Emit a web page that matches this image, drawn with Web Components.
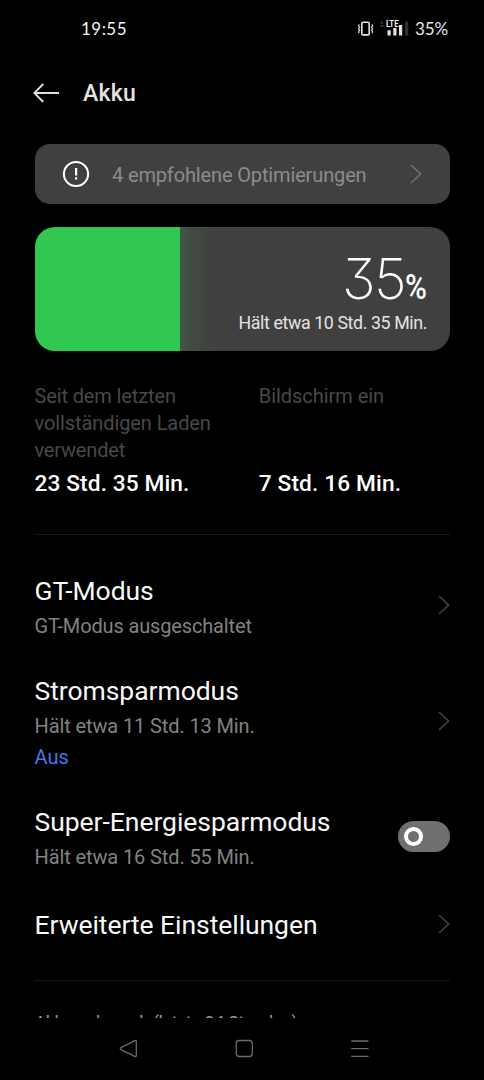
<!DOCTYPE html>
<html lang="de">
<head>
<meta charset="utf-8">
<title>Akku</title>
<style>
html,body{margin:0;background:#000;height:100%;overflow:hidden}
body{font-family:Roboto,"Liberation Sans",sans-serif}
</style>
</head>
<body>
<battery-screen></battery-screen>
<script>
const make = (name, html, after) => customElements.define(name, class extends HTMLElement {
  connectedCallback() {
    if (this.shadowRoot) return;
    const t = document.createElement('template');
    t.innerHTML = html;
    this.attachShadow({mode: 'open'}).append(t.content.cloneNode(true));
    if (after) after(this);
  }
});

// One line of text, tracked so that it fills the width given in "w".
make('fit-text', `<style>:host{display:block;white-space:nowrap}span{display:inline-block}</style><span><slot></slot></span>`, el => {
  const s = el.shadowRoot.querySelector('span');
  const w = parseFloat(el.getAttribute('w'));
  const nodes = el.shadowRoot.querySelector('slot').assignedNodes({flatten: true});
  const n = nodes.map(x => x.textContent).join('').length;
  if (w && n) s.style.letterSpacing = ((w - s.getBoundingClientRect().width) / n).toFixed(3) + 'px';
});

make('chevron-icon', `<style>:host{display:block;width:12px;height:20px;color:#424242}svg{display:block}</style>
<svg width="12" height="20" viewBox="0 0 12 20" fill="none" stroke="currentColor" stroke-width="1.6"><path d="M1 1 10.600 10 1 19"/></svg>`);

make('status-bar', `<style>
:host{display:flex;height:56px;box-sizing:border-box;padding:17px 36px 0 81px;justify-content:space-between;color:#e8e8e8;font-family:Lato,Roboto,sans-serif;font-size:17px;line-height:24px}
.r{display:flex}svg{display:block}
.t{color:#f4f4f4}
</style>
<fit-text class="t" w="46">19:55</fit-text>
<div class="r">
<svg width="58" height="24" viewBox="357 17 58 24" fill="none">
<rect x="361.800" y="22.300" width="7.400" height="12.600" rx="1.200" stroke="#e4e4e4" stroke-width="1.600"/>
<path d="M358.800 24.200v2l.8 1-1 1.500 1 1.500-.8 1v2M372.400 24.200v2l-.8 1 1 1.500-1 1.500.8 1v2" stroke="#c8c8c8" stroke-width="1.400"/>
<path d="M379.600 23.400 381.800 21l2.200 2.400zM379.600 25l2.200 2.400L384 25z" fill="#383838"/>
<text x="386" y="26.600" font-family="Roboto" font-size="8.300" font-weight="700" fill="#f0f0f0" textLength="12.500" lengthAdjust="spacingAndGlyphs">LTE</text>
<path d="M387.500 30.200h3.200v5.400h-3.200zM393.300 28h3.200v7.600h-3.200zM399 25h3.200v10.600h-3.200z" fill="#e4e4e4"/>
<path d="M405 21.500h3.200v14.100H405z" fill="#303030"/>
</svg>
<fit-text w="33">35%</fit-text>
</div>`);

make('app-header', `<style>
:host{display:flex;height:88px;box-sizing:border-box;padding:21px 0 0 33px;align-items:flex-start;color:#e2e2e2}
svg{display:block;margin-top:6px}
fit-text{margin:1px 0 0 24px;font-size:23px;font-weight:500;line-height:32px}
</style>
<svg width="26" height="20" viewBox="0 0 26 20" fill="none" stroke="#e0e0e0" stroke-width="1.800"><path d="M26 10H1.500M10.300 1 1.300 10l9 9"/></svg>
<fit-text w="53"><slot></slot></fit-text>`);

make('tip-card', `<style>
:host{display:flex;align-items:center;height:60px;margin:0 34.500px;border-radius:15px;background:#404040;color:#8c8c8c}
svg{display:block;margin-left:27.500px}
fit-text{margin-left:22px;font-size:20px;line-height:26px;padding-top:2px}
chevron-icon{margin-left:auto;margin-right:28px;color:#707070}
</style>
<svg width="28" height="28" viewBox="0 0 28 28" fill="none"><circle cx="14" cy="14" r="12.100" stroke="#fff" stroke-width="2"/><path d="M13 8h2.200v7.500H13zM13 17.200h2.200v2.300H13z" fill="#fff"/></svg>
<fit-text w="254.500"><slot></slot></fit-text><chevron-icon></chevron-icon>`);

make('battery-card', `<style>
:host{display:flex;flex-direction:column;align-items:flex-end;height:124px;box-sizing:border-box;margin:23px 34.500px 0;padding-right:22.500px;border-radius:20px;color:#fff;
background:linear-gradient(90deg,#30c850 0 145.500px,#405844 145.500px,#404b42 158px,#404040 180px)}
.n{display:flex;align-items:baseline;height:82px;line-height:104px}
.d{font-family:Inter,sans-serif;font-weight:200;font-size:56.500px;font-feature-settings:"cv09" 1}
.p{font-family:Roboto,sans-serif;font-weight:500;font-size:35px;width:22px;transform:scaleX(.85);transform-origin:0 0}
.s{font-size:17.800px;line-height:28px;color:#e4e4e4}
</style>
<div class="n"><fit-text class="d" w="63">35</fit-text><fit-text class="p">%</fit-text></div>
<fit-text class="s" w="188.500"><slot></slot></fit-text>`);

make('usage-stats', `<style>
:host{display:grid;grid-template-columns:224.300px 1fr;margin:31px 34px 0 34.500px;height:152px;box-sizing:content-box;border-bottom:1px solid #1a1a1a}
.l{font-size:20px;line-height:27.200px;height:84.500px;padding-top:.5px;color:#484848}
.v{font-size:22.700px;font-weight:500;line-height:34px;color:#fff}
</style>
<div><div class="l"><fit-text w="141.300">Seit dem letzten</fit-text><fit-text w="176.300">vollständigen Laden</fit-text><fit-text w="90.500">verwendet</fit-text></div><fit-text class="v" w="155">23 Std. 35 Min.</fit-text></div>
<div><div class="l"><fit-text w="125.200">Bildschirm ein</fit-text></div><fit-text class="v" w="142.300">7 Std. 16 Min.</fit-text></div>`);

make('setting-row', `<style>
:host{display:flex;justify-content:space-between;align-items:center;margin:0 34px 0 34.500px}
::slotted([slot=title]){font-size:26.500px;line-height:36px;color:#f8f8f8}
::slotted([slot=sub]){font-size:20px;line-height:30px;padding-top:2px;color:#828282}
::slotted([slot=state]){font-size:20px;line-height:31px;padding-top:1px;color:#4478e8}
</style>
<div><slot name="title"></slot><slot name="sub"></slot><slot name="state"></slot></div><slot name="end"></slot>`);

make('toggle-switch', `<style>:host{display:flex;align-items:center;width:52px;height:31px;border-radius:16px;background:#707070;box-sizing:border-box;padding-left:6px}
i{box-sizing:border-box;width:19px;height:19px;border:4.500px solid #fff;border-radius:50%}</style><i></i>`);

make('nav-bar', `<style>:host{display:block;height:62px;background:#000}svg{display:block}</style>
<svg width="484" height="62" viewBox="0 1018 484 62" fill="none" stroke="#6c6c6c" stroke-width="1.300">
<path d="M121 1047.600 134.800 1040.600Q136.300 1040 136.300 1041.600V1055.400Q136.300 1057 134.800 1056.400L121 1049.600Q119.600 1048.600 121 1047.600Z"/>
<rect x="236.300" y="1040.500" width="16" height="16" rx="3"/>
<path d="M351.300 1041h17.200M351.300 1048.700h17.200M351.300 1056.400h17.200"/></svg>`);

make('battery-screen', `<style>
:host{display:flex;flex-direction:column;width:484px;height:1080px;background:#000;overflow:hidden}
main{height:873.500px;margin-bottom:.5px;overflow:hidden;flex:none}
.gt{margin-top:38px}.st{margin-top:32px}.su{margin-top:31px}.er{margin-top:35px}
.gt chevron-icon{margin-bottom:4px}.st chevron-icon{margin-bottom:5px}
toggle-switch{margin-bottom:3px}
.er chevron-icon{margin-bottom:2px}
hr{border:0;height:1px;background:#1a1a1a;margin:37px 34px 0}
.foot{margin:29px 34.500px 0;font-size:18px;line-height:26px;color:#9a9a9a}
</style>
<status-bar></status-bar>
<app-header>Akku</app-header>
<main>
<tip-card>4 empfohlene Optimierungen</tip-card>
<battery-card>Hält etwa 10 Std. 35 Min.</battery-card>
<usage-stats></usage-stats>
<setting-row class="gt"><fit-text slot="title" w="119.200">GT-Modus</fit-text><fit-text slot="sub" w="217.300">GT-Modus ausgeschaltet</fit-text><chevron-icon slot="end"></chevron-icon></setting-row>
<setting-row class="st"><fit-text slot="title" w="204.300">Stromsparmodus</fit-text><fit-text slot="sub" w="220.200">Hält etwa 11 Std. 13 Min.</fit-text><fit-text slot="state" w="34.300">Aus</fit-text><chevron-icon slot="end"></chevron-icon></setting-row>
<setting-row class="su"><fit-text slot="title" w="296">Super-Energiesparmodus</fit-text><fit-text slot="sub" w="220.200">Hält etwa 16 Std. 55 Min.</fit-text><toggle-switch slot="end"></toggle-switch></setting-row>
<setting-row class="er"><fit-text slot="title" w="283">Erweiterte Einstellungen</fit-text><chevron-icon slot="end"></chevron-icon></setting-row>
<hr>
<fit-text class="foot" w="263">Akkuverbrauch (letzte 24 Stunden)</fit-text>
</main>
<nav-bar></nav-bar>`);
</script>
</body>
</html>
